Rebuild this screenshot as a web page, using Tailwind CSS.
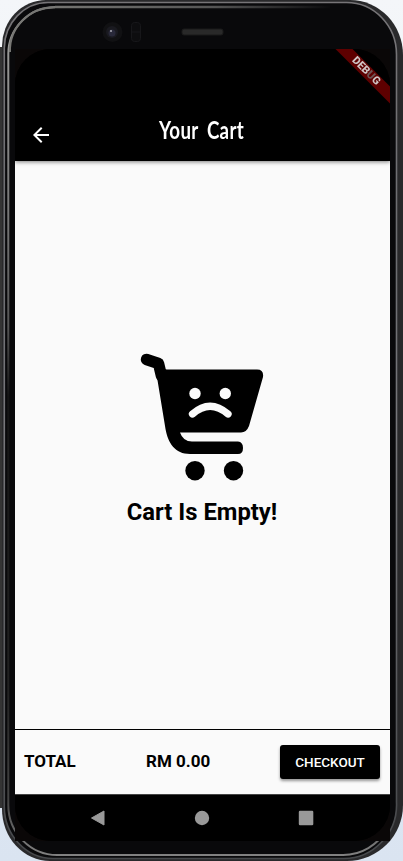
<!DOCTYPE html>
<html lang="en">
<head>
<meta charset="utf-8">
<title>Your Cart</title>
<script src="https://cdn.jsdelivr.net/npm/@tailwindcss/browser@4"></script>
</head>
<body class="w-[403px] h-[861px] overflow-hidden bg-linear-to-b from-[#f4f6f9] to-[#dae4f1] font-['Roboto',sans-serif]">
<div class="relative w-[403px] h-[861px] pl-[15px] pr-[13px] flex flex-col">
  <!-- device shell -->
  <svg class="absolute inset-0" width="403" height="861" viewBox="0 0 403 861" fill="none">
    <defs>
      <linearGradient id="rim" x1="0" y1="0" x2="0" y2="861" gradientUnits="userSpaceOnUse">
        <stop offset="0" stop-color="#777578"/><stop offset=".3" stop-color="#6c6d71"/><stop offset=".5" stop-color="#77777b"/><stop offset="1" stop-color="#45474a"/>
      </linearGradient>
      <linearGradient id="inner" x1="0" y1="0" x2="0" y2="861" gradientUnits="userSpaceOnUse">
        <stop offset="0" stop-color="#777"/><stop offset=".05" stop-color="#999997"/><stop offset=".25" stop-color="#777"/><stop offset=".38" stop-color="#555"/><stop offset=".46" stop-color="#151515"/><stop offset=".8" stop-color="#222"/><stop offset=".93" stop-color="#444"/><stop offset="1" stop-color="#888"/>
      </linearGradient>
      <linearGradient id="topbar" x1="40" y1="0" x2="330" y2="0" gradientUnits="userSpaceOnUse">
        <stop offset="0" stop-color="#777774"/><stop offset=".6" stop-color="#555"/><stop offset="1" stop-color="#0b0b0d"/>
      </linearGradient>
    </defs>
    <path d="M0 47h8v761H0z" fill="#343434"/>
    <path d="M46 0H350A53 55 0 0 1 403 55V805A56 56 0 0 1 347 861H50A48 52 0 0 1 2 809V46A44 46 0 0 1 46 0Z" fill="#29292b"/>
    <path d="M48 2.500H346A50 52 0 0 1 396.500 55V802A53 54 0 0 1 343 858.500H53A49 52 0 0 1 4.300 806V48A44 46 0 0 1 48 2.500Z" fill="#09090b" stroke="url(#rim)" stroke-width="1.600"/>
    <path d="M55 7A47 47 0 0 0 8.300 54V805A49 50 0 0 0 58 855H343A51 53 0 0 0 387 829" stroke="url(#inner)" stroke-width="2"/>
    <path d="M10 52A44 43 0 0 1 55 7.500" stroke="#777774" stroke-width="2"/>
    <path d="M55 7H330" stroke="url(#topbar)" stroke-width="2.500"/>
    <circle cx="112.500" cy="32" r="10" fill="#111113"/>
    <circle cx="112" cy="32" r="6" fill="#1a1a20"/>
    <circle cx="112" cy="33" r="3.500" fill="#29293a"/>
    <circle cx="111" cy="31" r="1" fill="#aaaab4"/>
    <rect x="131.500" y="22.500" width="9" height="19" rx="3" fill="#0d0d0f" stroke="#17171a"/>
    <path d="M132 32h8" stroke="#17171a"/>
    <rect x="182" y="29" width="41" height="6" rx="2" fill="#292929" stroke="#1b1b1b"/>
    <path d="M15 49H390V841H15z" fill="#0a0707"/>
  </svg>

  <main class="relative mt-[49px] w-[375px] h-[792px] rounded-[36px] overflow-hidden flex flex-col bg-black">
    <header class="relative z-10 h-[112px] shrink-0 bg-black text-white pt-[60px] px-[14px] flex items-center shadow-[0_1px_4px_rgba(0,0,0,.5)]">
      <svg class="w-6 h-6 -mt-px" viewBox="0 0 24 24" fill="currentColor"><path d="M20 11H7.830l5.590-5.590L12 4l-8 8 8 8 1.410-1.410L7.830 13H20z"/></svg>
      <h1 class="ml-[106px] -mt-[10px] whitespace-nowrap origin-left scale-x-[.78] font-['Lato'] font-bold text-[24px] leading-[28px] tracking-[0.4px] [word-spacing:5px]">Your Cart</h1>
      <div class="absolute -right-[38px] top-[16px] w-[124px] h-[12px] rotate-45 bg-[#5e0000] flex justify-center">
        <span class="text-[11px] leading-[12px] font-black text-transparent bg-clip-text bg-[linear-gradient(90deg,#d0c5c5_56%,#6d5555_60%,#6d5555_76%,#d0c5c5_80%)]">DEBUG</span>
      </div>
    </header>

    <section class="grow flex flex-col items-center pt-[188px] bg-[#fafafa]">
      <svg class="w-[130px] h-[136px] ml-[1px]" viewBox="138 349 130 136" fill="none">
        <path d="M146.500 359.500L158.500 363.500L161.500 376" stroke="#000" stroke-width="11.500" stroke-linecap="round" stroke-linejoin="round"/>
        <path d="M155.500 368L167 369.500H257Q264 369.500 263 377L249 426Q246.500 432.500 241 432.500H180Q183 441.500 192 441.500H238Q243 442 243 448T238 454H190C175 454 168 443 165.500 429Z" fill="#000"/>
        <circle cx="195" cy="393.500" r="5.700" fill="#fafafa"/><circle cx="225.300" cy="393.500" r="5.700" fill="#fafafa"/>
        <path d="M192.500 414Q210 398.500 228 414" stroke="#fafafa" stroke-width="7.300" stroke-linecap="round"/>
        <circle cx="195" cy="470.700" r="9.700" fill="#000"/><circle cx="233.500" cy="470.700" r="9.700" fill="#000"/>
      </svg>
      <p class="mt-[13px] -ml-px text-[23.800px] leading-[28px] font-bold text-black whitespace-nowrap">Cart Is Empty!</p>
    </section>

    <footer class="h-[65px] shrink-0 border-t border-black bg-[#fafafa] pl-[9px] pr-[10px] flex items-center text-black">
      <span class="w-[122px] text-[17px] font-bold">TOTAL</span>
      <span class="text-[17px] font-bold whitespace-nowrap">RM 0.00</span>
      <button class="ml-auto w-[100px] h-[34px] rounded-[3px] bg-black text-white text-[13.500px] font-medium shadow-[0_2px_3px_rgba(0,0,0,.4)]">CHECKOUT</button>
    </footer>

    <nav class="h-[47px] shrink-0 bg-black border-t border-[#444] flex justify-between pl-[75px] pr-[76px] pt-[15px]">
      <svg class="w-4 h-4" viewBox="0 0 16 16"><path d="M14 1v14L1.500 8z" fill="#999" stroke="#999" stroke-linejoin="round"/></svg>
      <svg class="w-4 h-4" viewBox="0 0 16 16"><circle cx="8" cy="8" r="7.200" fill="#999"/></svg>
      <svg class="w-4 h-4" viewBox="0 0 16 16"><rect x=".8" y=".8" width="14.500" height="14.500" rx="1.200" fill="#999"/></svg>
    </nav>
  </main>
</div>
</body>
</html>
